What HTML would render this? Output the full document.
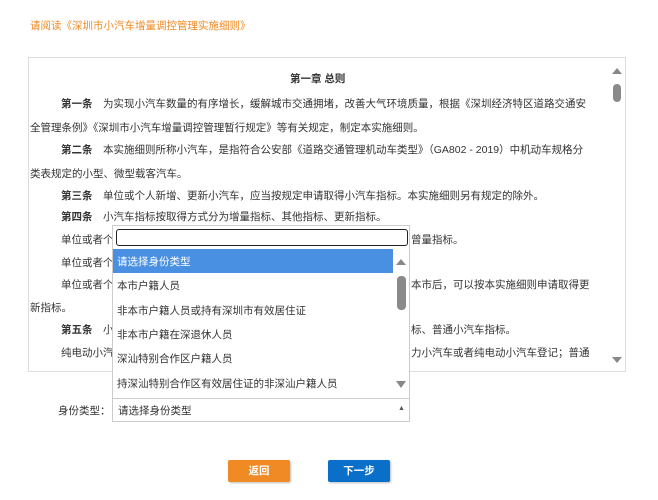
<!DOCTYPE html>
<html><head><meta charset="utf-8"><style>
*{margin:0;padding:0;box-sizing:border-box}
body{width:658px;height:500px;background:#fff;font-family:"Liberation Sans","Noto Sans CJK SC",sans-serif;font-size:10.5px;color:#333;position:relative;overflow:hidden}
.a{position:absolute;white-space:nowrap;line-height:12px}
b{font-weight:bold}
#box{position:absolute;left:28px;top:57px;width:598px;height:315px;border:1px solid #ddd;overflow:hidden}
.tri{position:absolute;width:0;height:0;border-left:5px solid transparent;border-right:5px solid transparent}
</style></head><body>
<div class="a" style="left:30px;top:20px;color:#f08a24;font-size:10.5px">请阅读《深圳市小汽车增量调控管理实施细则》</div>
<div id="box">
<div class="a" style="left:261px;top:15px;font-weight:bold">第一章 总则</div>
<div class="a" style="left:32px;top:40px"><b>第一条</b>　为实现小汽车数量的有序增长，缓解城市交通拥堵，改善大气环境质量，根据《深圳经济特区道路交通安</div>
<div class="a" style="left:1px;top:64px">全管理条例》《深圳市小汽车增量调控管理暂行规定》等有关规定，制定本实施细则。</div>
<div class="a" style="left:32px;top:86px"><b>第二条</b>　本实施细则所称小汽车，是指符合公安部《道路交通管理机动车类型》（GA802 - 2019）中机动车规格分</div>
<div class="a" style="left:1px;top:110px">类表规定的小型、微型载客汽车。</div>
<div class="a" style="left:32px;top:132px"><b>第三条</b>　单位或个人新增、更新小汽车，应当按规定申请取得小汽车指标。本实施细则另有规定的除外。</div>
<div class="a" style="left:32px;top:153px"><b>第四条</b>　小汽车指标按取得方式分为增量指标、其他指标、更新指标。</div>
<div class="a" style="left:32px;top:176px">单位或者个</div><div class="a" style="left:382px;top:176px">曾量指标。</div>
<div class="a" style="left:32px;top:199px">单位或者个</div>
<div class="a" style="left:32px;top:221px">单位或者个</div><div class="a" style="left:382px;top:221px">本市后，可以按本实施细则申请取得更</div>
<div class="a" style="left:1px;top:244px">新指标。</div>
<div class="a" style="left:32px;top:266px"><b>第五条</b>　小</div><div class="a" style="left:382px;top:266px">标、普通小汽车指标。</div>
<div class="a" style="left:32px;top:289px">纯电动小汽</div><div class="a" style="left:382px;top:289px">力小汽车或者纯电动小汽车登记；普通</div>
<div class="tri" style="left:583px;top:10px;border-bottom:6px solid #888"></div>
<div style="position:absolute;left:584px;top:26px;width:8px;height:18px;border-radius:4px;background:#8a8a8a"></div>
<div class="tri" style="left:583px;top:299px;border-top:6px solid #888"></div>
</div>
<div class="a" style="left:58px;top:405px">身份类型：</div>
<div style="position:absolute;left:112px;top:398px;width:298px;height:24px;border:1px solid #ccc;background:#fff"></div>
<div class="a" style="left:118px;top:405px">请选择身份类型</div>
<div class="a" style="left:398px;top:403px;font-size:7px;color:#555">▲</div>
<div style="position:absolute;left:112px;top:225px;width:298px;height:173px;border:1px solid #ccc;border-bottom:none;background:#fff">
<div style="position:absolute;left:3px;top:3px;width:292px;height:17px;border:1px solid #222;border-radius:3px"></div>
<div style="position:absolute;left:0;top:23px;width:280px;height:24px;background:#4a90e2"></div>
<div class="a" style="left:4px;top:30px;color:#fff">请选择身份类型</div>
<div class="a" style="left:4px;top:54px">本市户籍人员</div>
<div class="a" style="left:4px;top:79px">非本市户籍人员或持有深圳市有效居住证</div>
<div class="a" style="left:4px;top:103px">非本市户籍在深退休人员</div>
<div class="a" style="left:4px;top:127px">深汕特别合作区户籍人员</div>
<div class="a" style="left:4px;top:152px">持深汕特别合作区有效居住证的非深汕户籍人员</div>
<div class="tri" style="left:283px;top:33px;border-bottom:6px solid #888"></div>
<div style="position:absolute;left:284px;top:50px;width:9px;height:34px;border-radius:4px;background:#8a8a8a"></div>
<div class="tri" style="left:283px;top:155px;border-top:7px solid #888"></div>
</div>
<div style="position:absolute;left:228px;top:460px;width:62px;height:22px;background:#f08a24;border-radius:2px;color:#fff;font-weight:bold;text-align:center;line-height:22px;box-shadow:1px 1px 2px #bbb">返回</div>
<div style="position:absolute;left:328px;top:460px;width:62px;height:22px;background:#0a6fc8;border-radius:2px;color:#fff;font-weight:bold;text-align:center;line-height:22px;box-shadow:1px 1px 2px #bbb">下一步</div>
</body></html>
